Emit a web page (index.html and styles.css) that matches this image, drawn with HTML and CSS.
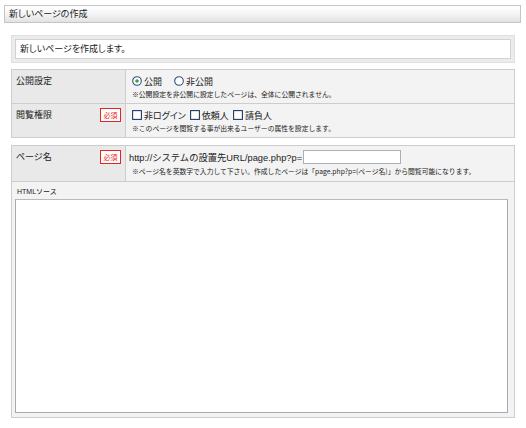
FILE: index.html
```html
<!DOCTYPE html>
<html lang="ja">
<head>
<meta charset="utf-8">
<title>新しいページの作成</title>
<link rel="stylesheet" href="styles.css">
</head>
<body>
<div class="page">
  <div class="header">新しいページの作成</div>

  <div class="intro">
    <div class="intro-inner">新しいページを作成します。</div>
  </div>

  <div class="form-table">
    <div class="label-cell first"><span class="label-text">公開設定</span></div>
    <div class="value-cell first">
      <div class="choice-line">
        <span class="choice">
          <svg class="radio" viewBox="0 0 10 10" width="10" height="10"><circle cx="5" cy="5" r="4.3" fill="#fff" stroke="#2d4f86" stroke-width="1.1"/><circle cx="5" cy="5" r="1.8" fill="#3aa52f"/></svg>公開
        </span>
        <span class="choice gap">
          <svg class="radio" viewBox="0 0 10 10" width="10" height="10"><circle cx="5" cy="5" r="4.3" fill="#fff" stroke="#2d4f86" stroke-width="1.1"/></svg>非公開
        </span>
      </div>
      <div class="note">※公開設定を非公開に設定したページは、全体に公開されません。</div>
    </div>

    <div class="label-cell"><span class="label-text">閲覧権限</span><span class="badge">必須</span></div>
    <div class="value-cell">
      <div class="choice-line">
        <span class="choice">
          <svg class="check" viewBox="0 0 10 10" width="10" height="10"><rect x="0.6" y="0.6" width="8.8" height="8.8" fill="#fff" stroke="#1d3b63" stroke-width="1.1"/></svg>非ログイン
        </span>
        <span class="choice">
          <svg class="check" viewBox="0 0 10 10" width="10" height="10"><rect x="0.6" y="0.6" width="8.8" height="8.8" fill="#fff" stroke="#1d3b63" stroke-width="1.1"/></svg>依頼人
        </span>
        <span class="choice">
          <svg class="check" viewBox="0 0 10 10" width="10" height="10"><rect x="0.6" y="0.6" width="8.8" height="8.8" fill="#fff" stroke="#1d3b63" stroke-width="1.1"/></svg>請負人
        </span>
      </div>
      <div class="note">※このページを閲覧する事が出来るユーザーの属性を設定します。</div>
    </div>
  </div>

  <div class="form-table second">
    <div class="label-cell first"><span class="label-text">ページ名</span><span class="badge">必須</span></div>
    <div class="value-cell first">
      <div class="url-line">http://システムの設置先URL/page.php?p=<input class="name-input" type="text"></div>
      <div class="note">※ページ名を英数字で入力して下さい。作成したページは「page.php?p=(ページ名)」から閲覧可能になります。</div>
    </div>
    <div class="full-cell">
      <div class="small-label">HTMLソース</div>
      <textarea class="source"></textarea>
    </div>
  </div>
</div>
</body>
</html>
```

FILE: styles.css
```css
html, body {
  margin: 0;
  padding: 0;
  background: #fff;
}
body {
  font-family: "Liberation Sans", "Noto Sans CJK JP", sans-serif;
  color: #222;
  width: 526px;
  height: 428px;
  overflow: hidden;
}
.page {
  padding: 5px 0 0 0;
}
.header {
  margin: 0 5px 0 4px;
  height: 16px;
  border: 1px solid #c4c4c4;
  background: linear-gradient(#ffffff 0%, #f6f6f6 45%, #e2e2e2 100%);
  font-family: "Noto Sans CJK JP", sans-serif;
  font-size: 9px;
  line-height: 16px;
  padding-left: 4px;
  font-feature-settings: "palt";
}
.intro {
  margin: 12px 11px 0 11px;
  background: #ececec;
  border: 1px solid #e0e0e0;
  padding: 3px;
}
.intro-inner {
  background: #fff;
  border: 1px solid #d2d2d2;
  height: 18px;
  line-height: 18px;
  padding-left: 4px;
  font-family: "Noto Sans CJK JP", sans-serif;
  font-size: 9px;
  font-feature-settings: "palt";
}
.form-table {
  margin: 6px 11px 0 11px;
  display: grid;
  grid-template-columns: 114px 1fr;
  border: 1px solid #cdcdcd;
  border-top: none;
}
.form-table.second {
  margin-top: 7px;
}
.label-cell {
  background: #e9e9e9;
  border-top: 1px solid #cdcdcd;
  border-right: 1px solid #cdcdcd;
  display: flex;
  justify-content: space-between;
  align-items: flex-start;
  padding: 4px 4px 0 4px;
  height: 29px;
}
.value-cell {
  background: #f3f3f3;
  border-top: 1px solid #cdcdcd;
  padding: 4px 6px 0 6px;
  height: 29px;
}
.form-table.second .label-cell.first,
.form-table.second .value-cell.first {
  height: 31px;
}
.label-text {
  font-family: "Noto Sans CJK JP", sans-serif;
  font-size: 9px;
  line-height: 14px;
  font-feature-settings: "palt";
}
.badge {
  display: inline-block;
  box-sizing: border-box;
  height: 14px;
  width: 21px;
  border: 1px solid #e8231d;
  background: #fff;
  color: #e8231d;
  font-family: "Noto Sans CJK JP", sans-serif;
  font-size: 7px;
  line-height: 12px;
  text-align: center;
}
.choice-line {
  display: flex;
  align-items: center;
  height: 14px;
  font-family: "Noto Sans CJK JP", sans-serif;
  font-size: 9px;
  font-feature-settings: "palt";
}
.choice {
  display: inline-flex;
  align-items: center;
  margin-right: 4px;
}
.choice.gap {
  margin-left: 8px;
}
.radio, .check {
  margin-right: 2px;
  flex: none;
}
.note {
  font-family: "Noto Sans CJK JP", sans-serif;
  font-size: 6.8px;
  line-height: 11px;
  margin-top: 1px;
  white-space: nowrap;
}
.url-line {
  display: flex;
  align-items: center;
  height: 14px;
  font-size: 9.3px;
  font-family: "Liberation Sans", "Noto Sans CJK JP", sans-serif;
  margin-left: -3px;
}
.name-input {
  box-sizing: border-box;
  width: 98px;
  height: 14px;
  border: 1px solid #a9b0b8;
  padding: 0;
  margin: 0 0 0 1px;
  background: #fff;
}
.form-table.second .note {
  margin-top: 2px;
}
.full-cell {
  grid-column: 1 / 3;
  background: #f3f3f3;
  border-top: 1px solid #cdcdcd;
  padding: 4px 3px 4px 3px;
}
.small-label {
  font-family: "Liberation Sans", "Noto Sans CJK JP", sans-serif;
  font-size: 7px;
  line-height: 12px;
  padding-left: 2px;
  height: 13px;
}
.source {
  display: block;
  box-sizing: border-box;
  width: 493px;
  height: 214px;
  margin: 0;
  border: 1px solid #a3aab3;
  border-top-color: #b4bac0;
  background: #fff;
  resize: none;
}
```
